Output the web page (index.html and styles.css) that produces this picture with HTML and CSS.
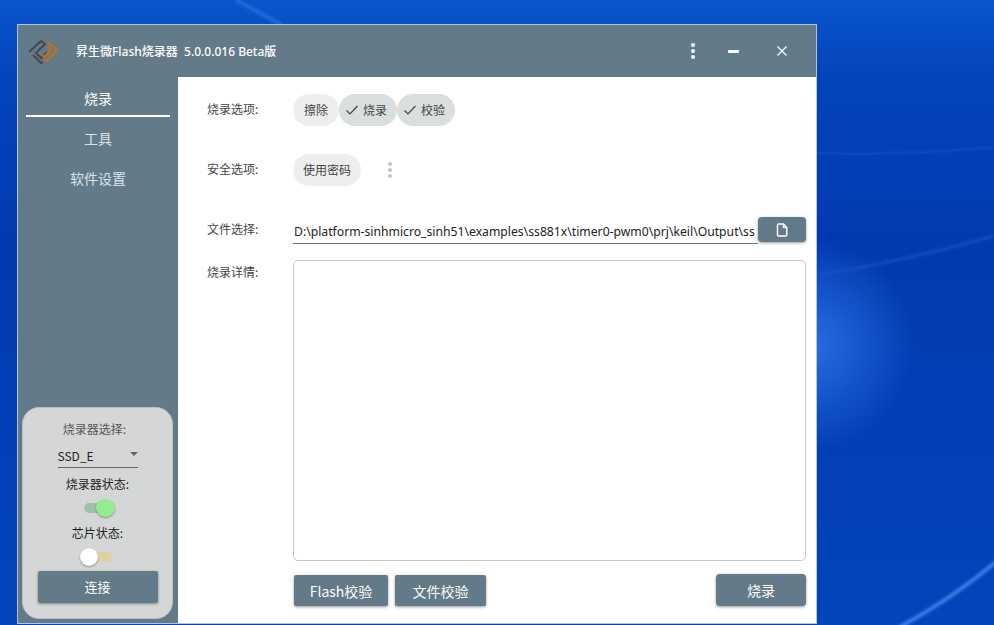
FILE: index.html
```html
<!DOCTYPE html>
<html lang="zh-CN">
<head>
  <meta charset="UTF-8">
  <meta name="viewport" content="width=device-width, initial-scale=1.0">
  <title>昇生微Flash烧录器</title>
  <link rel="stylesheet" href="styles.css">
</head>
<body>
  <!-- Desktop wallpaper -->
  <svg class="wallpaper" viewBox="0 0 994 625" preserveAspectRatio="none" aria-hidden="true">
    <defs>
      <linearGradient id="wall" x1="0" y1="0" x2="0" y2="1">
        <stop offset="0" stop-color="#0a55cc"/>
        <stop offset="0.12" stop-color="#0344bc"/>
        <stop offset="0.4" stop-color="#013ab0"/>
        <stop offset="1" stop-color="#0345bc"/>
      </linearGradient>
      <radialGradient id="glow" cx="810" cy="345" r="105" gradientUnits="userSpaceOnUse">
        <stop offset="0" stop-color="#2a70e4" stop-opacity="0.95"/>
        <stop offset="1" stop-color="#2a70e4" stop-opacity="0"/>
      </radialGradient>
      <filter id="soft"><feGaussianBlur stdDeviation="1.5"/></filter>
    </defs>
    <rect width="994" height="625" fill="url(#wall)"/>
    <rect x="700" y="235" width="220" height="220" fill="url(#glow)"/>
    <path d="M817 153 Q900 156 994 147" stroke="#0f50c6" stroke-width="2" fill="none" filter="url(#soft)"/>
    <path d="M817 275 Q900 262 994 236" stroke="#1555ca" stroke-width="2" fill="none" filter="url(#soft)"/>
    <path d="M898 628 Q950 600 996 562" stroke="#4289f0" stroke-width="3.5" fill="none" filter="url(#soft)"/>
    <path d="M236 0 L282 25" stroke="#2a70dc" stroke-width="3" fill="none" filter="url(#soft)"/>
  </svg>

  <div class="window">
    <header class="titlebar">
      <svg class="logo" viewBox="0 0 30 30" aria-hidden="true">
        <path d="M1 16 L13 5 L17 8 L8 17 L13 22 L19 16" fill="none" stroke="#4a4650" stroke-width="2"/>
        <path d="M5 19 L13 27 L15 26" fill="none" stroke="#4a4650" stroke-width="2"/>
        <path d="M20 6 L29 14 L19 25 L17 23" fill="none" stroke="#c0701e" stroke-width="2"/>
        <path d="M19 10 L23 14 L16 21 L14 19" fill="none" stroke="#c0701e" stroke-width="2"/>
      </svg>
      <span class="app-title">昇生微Flash烧录器&nbsp;&nbsp;5.0.0.016 Beta版</span>
      <div class="win-controls">
        <span class="ctl-more"><i></i><i></i><i></i></span>
        <span class="ctl-min"></span>
        <svg class="ctl-close" viewBox="0 0 10 10" aria-hidden="true">
          <path d="M0.5 0.5 L9.5 9.5 M9.5 0.5 L0.5 9.5" stroke="#fff" stroke-width="1.2"/>
        </svg>
      </div>
    </header>

    <div class="body">
      <aside class="sidebar">
        <nav class="nav">
          <a class="nav-item active">烧录</a>
          <a class="nav-item">工具</a>
          <a class="nav-item">软件设置</a>
        </nav>
        <div class="device-card">
          <div class="card-label first">烧录器选择:</div>
          <div class="select"><span>SSD_E</span><i class="caret"></i></div>
          <div class="card-label dark">烧录器状态:</div>
          <div class="toggle on"><span class="track"></span><span class="thumb"></span></div>
          <div class="card-label dark">芯片状态:</div>
          <div class="toggle off"><span class="track"></span><span class="thumb"></span></div>
          <button class="btn connect">连接</button>
        </div>
      </aside>

      <main class="content">
        <div class="row row-burn">
          <label class="row-label">烧录选项:</label>
          <div class="chips">
            <span class="chip">擦除</span>
            <span class="chip checked"><svg viewBox="0 0 14 12" aria-hidden="true"><path d="M1.5 6.5 L5 10 L12.5 2" fill="none" stroke="#444" stroke-width="1.2"/></svg>烧录</span>
            <span class="chip checked"><svg viewBox="0 0 14 12" aria-hidden="true"><path d="M1.5 6.5 L5 10 L12.5 2" fill="none" stroke="#444" stroke-width="1.2"/></svg>校验</span>
          </div>
        </div>

        <div class="row row-safe">
          <label class="row-label">安全选项:</label>
          <div class="chips">
            <span class="chip">使用密码</span>
            <span class="more"><i></i><i></i><i></i></span>
          </div>
        </div>

        <div class="row row-file">
          <label class="row-label">文件选择:</label>
          <div class="file-input">D:\platform-sinhmicro_sinh51\examples\ss881x\timer0-pwm0\prj\keil\Output\ss</div>
          <button class="btn file-btn">
            <svg viewBox="0 0 12 14" aria-hidden="true"><path d="M1.5 2 Q1.5 1 2.5 1 H7.5 L10.8 4.5 V12 Q10.8 13 9.8 13 H2.5 Q1.5 13 1.5 12 Z M7.5 1 V4.5 H10.8" fill="none" stroke="#fff" stroke-width="1.4" stroke-linejoin="round"/></svg>
          </button>
        </div>

        <div class="row row-log">
          <label class="row-label">烧录详情:</label>
          <div class="log"></div>
        </div>

        <div class="actions">
          <button class="btn check-flash">Flash校验</button>
          <button class="btn check-file">文件校验</button>
          <button class="btn burn">烧录</button>
        </div>
      </main>
    </div>
  </div>
</body>
</html>
```

FILE: styles.css
```css
* {
  margin: 0;
  padding: 0;
  box-sizing: border-box;
}

body {
  width: 994px;
  height: 625px;
  overflow: hidden;
  position: relative;
  background-color: #0746b8;
  font-family: "Noto Sans CJK SC", "Noto Sans", sans-serif;
  font-size: 12px;
  color: #444;
}

.wallpaper {
  position: absolute;
  top: 0;
  left: 0;
  width: 994px;
  height: 625px;
}

/* App window */
.window {
  position: absolute;
  top: 24px;
  left: 17px;
  width: 800px;
  height: 600px;
  display: flex;
  flex-direction: column;
  background-color: #637a88;
  border: 1px solid #b9c3c9;
}

.titlebar {
  height: 52px;
  flex: none;
  display: flex;
  align-items: center;
  color: #fff;
}

.logo {
  width: 30px;
  height: 30px;
  margin-left: 10px;
}

.app-title {
  margin-left: 18px;
  font-size: 12px;
  font-family: "Noto Sans", "Noto Sans CJK SC", sans-serif;
  font-weight: 500;
}

.win-controls {
  margin-left: auto;
  display: flex;
  align-items: center;
}

.ctl-more {
  display: flex;
  flex-direction: column;
  gap: 2px;
  margin-right: 33px;
}

.ctl-more i {
  width: 4px;
  height: 4px;
  border-radius: 50%;
  background-color: #fff;
}

.ctl-min {
  width: 11px;
  height: 3px;
  border-radius: 1px;
  background-color: #fff;
  margin-right: 38px;
}

.ctl-close {
  width: 10px;
  height: 10px;
  margin-right: 29px;
}

.body {
  flex: 1;
  display: flex;
  min-height: 0;
}

/* Sidebar */
.sidebar {
  width: 160px;
  flex: none;
  display: flex;
  flex-direction: column;
  justify-content: space-between;
}

.nav {
  display: flex;
  flex-direction: column;
  align-items: center;
  padding-top: 3px;
}

.nav-item {
  width: 144px;
  height: 37px;
  margin-bottom: 3px;
  line-height: 37px;
  text-align: center;
  font-size: 14px;
  color: #d8e4ea;
}

.nav-item.active {
  color: #fff;
  border-bottom: 2px solid #fff;
}

.device-card {
  width: 151px;
  height: 212px;
  margin: 0 0 4px 4px;
  padding-top: 12px;
  display: flex;
  flex-direction: column;
  align-items: center;
  background-color: #d5d7d7;
  border: 1px solid #b9bfc2;
  border-radius: 17px;
}

.card-label {
  height: 18px;
  line-height: 18px;
  font-size: 12px;
  color: #555;
}

.card-label.first {
  padding-right: 6px;
}

.card-label.dark {
  color: #222;
}

.select {
  width: 80px;
  height: 30px;
  display: flex;
  align-items: center;
  justify-content: space-between;
  padding-top: 6px;
  margin-bottom: 7px;
  border-bottom: 1px solid #6a6a6a;
  color: #222;
}

.caret {
  width: 0;
  height: 0;
  margin-bottom: 3px;
  border-left: 4px solid transparent;
  border-right: 4px solid transparent;
  border-top: 4px solid #666;
}

.toggle {
  position: relative;
  height: 18px;
  margin: 6px 0 7px;
}

.track {
  position: absolute;
  top: 4px;
  height: 10px;
  border-radius: 5px;
}

.thumb {
  position: absolute;
  top: 0;
  width: 18px;
  height: 18px;
  border-radius: 50%;
  box-shadow: 0 1px 2px rgba(0, 0, 0, 0.35);
}

.toggle.on {
  width: 31px;
  margin-left: 4px;
}

.toggle.on .track {
  left: 0;
  width: 26px;
  background-color: #9cc3a6;
}

.toggle.on .thumb {
  left: 12px;
  width: 19px;
  background-color: #90ee90;
}

.toggle.off {
  width: 32px;
  margin-right: 3px;
  margin-bottom: 5px;
}

.toggle.off .track {
  left: 10px;
  width: 22px;
  background-color: #e0d2a0;
}

.toggle.off .thumb {
  left: 0;
  background-color: #fff;
}

/* Buttons */
.btn {
  border: none;
  border-radius: 2px;
  background-color: #637a88;
  color: #fff;
  font-family: inherit;
  box-shadow: 0 1px 3px rgba(0, 0, 0, 0.4);
}

.connect {
  width: 120px;
  height: 32px;
  padding-bottom: 2px;
  font-size: 13px;
}

/* Main area */
.content {
  flex: 1;
  min-width: 0;
  background-color: #fff;
  padding: 16px 10px 0 29px;
  display: flex;
  flex-direction: column;
}

.row {
  display: flex;
}

.row-label {
  width: 86px;
  flex: none;
  font-size: 12px;
  color: #444;
}

.row-burn {
  height: 33px;
  align-items: center;
  margin-bottom: 27px;
}

.row-safe {
  height: 33px;
  align-items: center;
  margin-bottom: 28px;
}

.row-burn .row-label,
.row-safe .row-label {
  padding-bottom: 2px;
}

.chips {
  display: flex;
  align-items: center;
}

.chip {
  height: 32px;
  display: flex;
  align-items: center;
  padding: 0 11px;
  border-radius: 16px;
  background-color: #eeeeee;
  font-size: 12px;
  color: #444;
}

.chip.checked {
  padding: 0 10px 0 6px;
  background-color: #d8dfde;
}

.chip svg {
  width: 14px;
  height: 12px;
  margin-right: 4px;
}

.row-safe .chip {
  padding: 0 10px;
}

.more {
  display: flex;
  flex-direction: column;
  gap: 2px;
  margin-left: 27px;
}

.more i {
  width: 4px;
  height: 4px;
  border-radius: 50%;
  background-color: #c4c4c4;
}

.row-file {
  height: 32px;
  margin-bottom: 14px;
}

.row-file .row-label {
  padding-top: 6px;
}

.file-input {
  width: 465px;
  height: 30px;
  padding: 9px 0 0 1px;
  overflow: hidden;
  white-space: nowrap;
  font-family: "Noto Sans", sans-serif;
  font-size: 12.2px;
  line-height: 17px;
  color: #222;
  border-bottom: 1px solid #777;
}

.file-btn {
  width: 48px;
  height: 25px;
  margin-top: 3px;
  display: flex;
  align-items: center;
  justify-content: center;
  border-radius: 4px;
}

.file-btn svg {
  width: 12px;
  height: 14px;
}

.row-log {
  height: 301px;
}

.row-log .row-label {
  padding-top: 3px;
}

.log {
  width: 513px;
  height: 301px;
  border: 1px solid #c8c8c8;
  border-radius: 5px;
}

.actions {
  display: flex;
  align-items: flex-start;
  margin-top: 14px;
  padding-left: 87px;
}

.actions .btn {
  height: 31px;
  font-size: 14px;
}

.check-flash {
  width: 94px;
  margin-right: 7px;
}

.check-file {
  width: 91px;
}

.actions .burn {
  width: 90px;
  height: 32px;
  margin-top: -1px;
  margin-left: auto;
  border-radius: 4px;
}
```
